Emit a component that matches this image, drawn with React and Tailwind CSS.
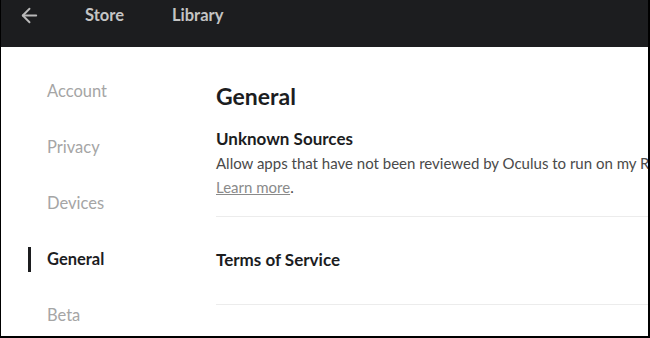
import { ArrowLeft } from "lucide-react";

const NAV = ["Account", "Privacy", "Devices", "General", "Beta"];

export default function App() {
  return (
    <div
      className="w-[650px] h-[338px] overflow-hidden bg-white border-l border-r-2 border-b-2 border-black flex flex-col"
      style={{ fontFamily: "Lato, 'Open Sans', sans-serif" }}
    >
      <header className="h-[47px] shrink-0 bg-[#1c1d1f] flex items-center">
        <ArrowLeft className="ml-[17px] w-[23px] h-[23px] text-[#b9b9b9] -mt-[16px]" strokeWidth={2} />
        <nav className="flex gap-[48px] ml-[44px] -mt-[16px] text-[16.5px] font-bold text-[#c4c4c4]">
          <span>Store</span>
          <span>Library</span>
        </nav>
      </header>

      <div className="flex flex-1 min-h-0">
        <aside className="w-[215px] shrink-0 pt-[16px]">
          {NAV.map((item) => (
            <div key={item} className="h-[56px] flex items-center relative">
              {item === "General" && (
                <span className="absolute left-[27px] top-[16px] w-[3px] h-[25px] bg-[#1c1d1f]" />
              )}
              <span
                className={`ml-[46px] text-[16.5px] ${
                  item === "General" ? "text-[#1c1d1f] font-bold" : "text-[#a5a5a5]"
                }`}
              >
                {item}
              </span>
            </div>
          ))}
        </aside>

        <main className="flex-1 min-w-0 pt-[36px] whitespace-nowrap">
          <h1 className="text-[23px] font-bold text-[#1c1d1f] leading-[26px]">General</h1>
          <div className="mt-[20px] pb-[16px] border-b border-[#ececec]">
            <h2 className="text-[17px] font-bold text-[#1c1d1f] leading-[20px]">Unknown Sources</h2>
            <p className="mt-[2px] text-[15px] text-[#4a4a4a] leading-[24px]">
              Allow apps that have not been reviewed by Oculus to run on my Rift.
            </p>
            <p className="text-[15px] text-[#4a4a4a] leading-[25px]">
              <span className="text-[#8a8a8a] underline">Learn more</span>.
            </p>
          </div>
          <div className="h-[88px] pb-[2px] flex items-center border-b border-[#ececec]">
            <h2 className="text-[17px] font-bold text-[#1c1d1f]">Terms of Service</h2>
          </div>
        </main>
      </div>
    </div>
  );
}
